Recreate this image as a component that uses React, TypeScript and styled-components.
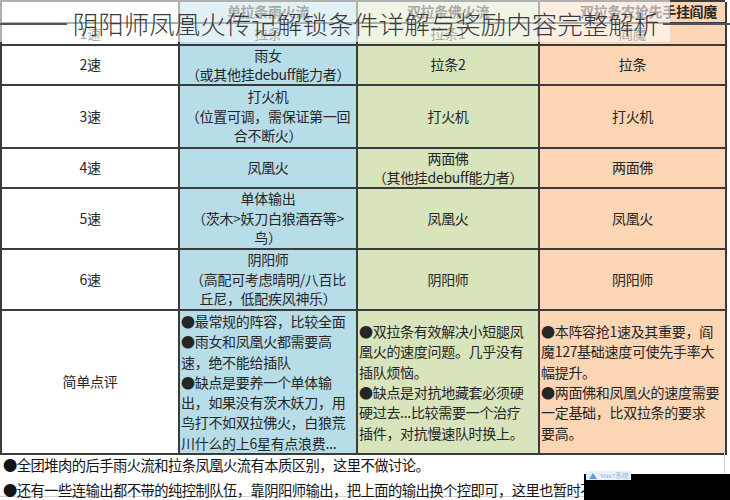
import React from "react";
import styled, { createGlobalStyle } from "styled-components";

const GlobalStyle = createGlobalStyle`
  html, body {
    margin: 0;
    padding: 0;
    background: #ffffff;
  }
  body {
    font-family: "Noto Sans CJK SC", "Noto Sans", sans-serif;
    color: #222;
  }
`;

const COLORS = ["#ffffff", "#b7dde8", "#d7e4bc", "#fcd5b4"];

interface IRow {
  height: number;
  cells: React.ReactNode[];
  left?: boolean;
}

const rows: IRow[] = [
  { height: 40, cells: ["2速", <>雨女<br />（或其他挂debuff能力者）</>, "拉条2", "拉条"] },
  { height: 63, cells: ["3速", <>打火机<br />（位置可调，需保证第一回<br />合不断火）</>, "打火机", "打火机"] },
  { height: 40, cells: ["4速", "凤凰火", <>两面佛<br />（其他挂debuff能力者）</>, "两面佛"] },
  { height: 61, cells: ["5速", <>单体输出<br />（茨木&gt;妖刀白狼酒吞等&gt;<br />鸟）</>, "凤凰火", "凤凰火"] },
  { height: 61, cells: ["6速", <>阴阳师<br />（高配可考虑晴明/八百比<br />丘尼，低配疾风神乐）</>, "阴阳师", "阴阳师"] },
  {
    height: 144,
    left: true,
    cells: [
      "简单点评",
      <>
        ●最常规的阵容，比较全面<br />●雨女和凤凰火都需要高<br />速，绝不能给插队<br />●缺点是要养一个单体输<br />
        出，如果没有茨木妖刀，用<br />鸟打不如双拉佛火，白狼荒<br />川什么的上6星有点浪费...
      </>,
      <>
        ●双拉条有效解决小短腿凤<br />凰火的速度问题。几乎没有<br />插队烦恼。<br />●缺点是对抗地藏套必须硬<br />
        硬过去...比较需要一个治疗<br />插件，对抗慢速队时换上。
      </>,
      <>
        ●本阵容抢1速及其重要，阎<br />魔127基础速度可使先手率大<br />幅提升。<br />●两面佛和凤凰火的速度需要<br />
        一定基础，比双拉条的要求<br />要高。
      </>,
    ],
  },
];

const App: React.FC = () => {
  return (
    <Page>
      <GlobalStyle />
      <Table>
        <Cell $col={0} $h={22} />
        <Cell $col={1} $h={22} $bold>单拉条雨火流</Cell>
        <Cell $col={2} $h={22} $bold>双拉条佛火流</Cell>
        <Cell $col={3} $h={22} $bold $alignEnd>双拉条农抢先手挂阎魔</Cell>
        <Cell $col={0} $h={22}>1速</Cell>
        <Cell $col={1} $h={22}>拉条</Cell>
        <Cell $col={2} $h={22}>拉条1</Cell>
        <Cell $col={3} $h={22}>阎魔</Cell>
        {rows.map((row, ri) =>
          row.cells.map((c, ci) => (
            <Cell key={`${ri}-${ci}`} $col={ci} $h={row.height} $left={row.left && ci > 0}>
              {c}
            </Cell>
          ))
        )}
      </Table>
      <Notes>
        <NoteLine>●全团堆肉的后手雨火流和拉条凤凰火流有本质区别，这里不做讨论。</NoteLine>
        <NoteLine>●还有一些连输出都不带的纯控制队伍，靠阴阳师输出，把上面的输出换个控即可，这里也暂时不做讨论。</NoteLine>
        <BlackBox>
          <Watermark>
            <svg width="10" height="8" viewBox="0 0 10 8">
              <path d="M1 7 L5 1 L9 7 Z" fill="#5f9fd6" />
            </svg>
            Win7系统
          </Watermark>
        </BlackBox>
      </Notes>
      <HeaderWash />
      <Title>阴阳师凤凰火传记解锁条件详解与奖励内容完整解析</Title>
    </Page>
  );
};

const Page = styled.div`
  position: relative;
  width: 730px;
  height: 500px;
  overflow: hidden;
  background: #fff;
`;

const Table = styled.div`
  display: grid;
  grid-template-columns: 178px 178px 182px 187px;
  border-top: 2px solid #3b3b3b;
  border-left: 2px solid #3b3b3b;
  width: 725px;
  box-sizing: border-box;
`;

const Cell = styled.div<{ $col: number; $h: number; $left?: boolean; $bold?: boolean; $alignEnd?: boolean }>`
  box-sizing: border-box;
  height: ${(p) => p.$h}px;
  background: ${(p) => COLORS[p.$col]};
  border-right: 2px solid #3b3b3b;
  border-bottom: 2px solid #3b3b3b;
  display: flex;
  flex-direction: column;
  justify-content: center;
  align-items: ${(p) => (p.$left ? "flex-start" : p.$alignEnd ? "flex-end" : "center")};
  text-align: ${(p) => (p.$left ? "left" : "center")};
  padding: ${(p) => (p.$left ? "0 0 0 1px" : p.$alignEnd ? "0 8px 0 0" : "0")};
  font-size: 14px;
  line-height: ${(p) => (p.$left ? "20.3px" : "19.5px")};
  font-weight: ${(p) => (p.$bold ? 700 : 400)};
  color: #262626;
  white-space: nowrap;
  letter-spacing: -0.3px;
`;

const Notes = styled.div`
  position: relative;
  width: 725px;
  height: 45px;
  box-sizing: border-box;
  border-right: 1px solid #d0d0d0;
  border-bottom: 1px solid #d0d0d0;
  padding: 0 0 0 3px;
`;

const NoteLine = styled.div`
  font-size: 14.3px;
  line-height: 25px;
  color: #141414;
  white-space: nowrap;
  letter-spacing: -0.55px;

  &:first-child {
    margin-top: -3px;
  }
`;

const BlackBox = styled.div`
  position: absolute;
  left: 584px;
  top: 22px;
  width: 160px;
  height: 30px;
  background: #000;
`;

const Watermark = styled.div`
  position: absolute;
  left: 2px;
  top: -3px;
  display: flex;
  align-items: center;
  gap: 2px;
  font-family: "Liberation Serif", serif;
  font-size: 7px;
  color: #8fb6dc;
  background: #e9f0f7;
  padding: 0 2px;
  height: 9px;
`;

const HeaderWash = styled.div`
  position: absolute;
  left: 0;
  top: 0;
  width: 670px;
  height: 42px;
  background: rgba(255, 255, 255, 0.6);
`;

const Title = styled.div`
  position: absolute;
  left: 0;
  top: 6px;
  width: 730px;
  display: flex;
  align-items: center;
  font-size: 25.5px;
  line-height: 34px;
  font-weight: 300;
  color: #3a3a3a;
  white-space: nowrap;

  &::before,
  &::after {
    content: "";
    flex: 1;
    height: 1.5px;
    background: #555;
    margin-top: 2px;
  }
  &::before {
    margin-right: 6px;
  }
  &::after {
    margin-left: 4px;
  }
`;

export default App;
